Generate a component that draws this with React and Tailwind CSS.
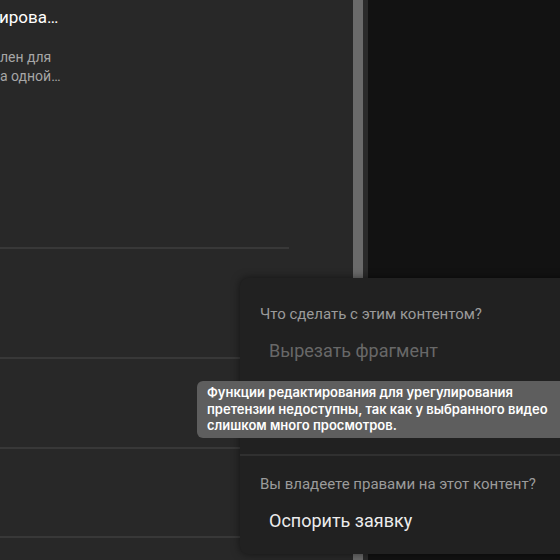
import React from 'react';

const Divider = () => <div className="h-[2px] w-[289px] bg-[#383838]" />;

const ClaimPopup = () => (
	<div className="absolute left-[240px] top-[278px] w-[340px] h-[276px] rounded-lg bg-[#212121] shadow-[0_0_8px_rgba(0,0,0,0.5)]">
		<div className="pt-[26px] pl-[20px] text-[15px] leading-[21px] text-[#9b9b9b]">
			Что сделать с этим контентом?
		</div>
		<div className="mt-[14px] pl-[29px] text-[18px] leading-[24px] text-[#686868]">
			Вырезать фрагмент
		</div>
		<div className="mt-[91px] h-[2px] bg-[#303030]" />
		<div className="mt-[18px] pl-[20px] text-[15px] leading-[21px] text-[#9b9b9b]">
			Вы владеете правами на этот контент?
		</div>
		<div className="mt-[14px] pl-[29px] text-[18px] leading-[24px] text-[#ececec]">
			Оспорить заявку
		</div>
	</div>
);

const Tooltip = () => (
	<div className="absolute left-[197px] top-[381px] w-[400px] rounded-md bg-[#5e5e5e] pl-[10px] pt-[3px] pb-[4px] font-[Inter,sans-serif] text-[13px] leading-[16.5px] font-semibold text-white whitespace-nowrap">
		Функции редактирования для урегулирования
		<br />
		претензии недоступны, так как у выбранного видео
		<br />
		слишком много просмотров.
	</div>
);

export default function App() {
	return (
		<div className="relative w-[560px] h-[560px] overflow-hidden flex font-[Roboto,sans-serif]">
			<div className="w-[353px] bg-[#282828] flex flex-col">
				<div className="pt-[5px] -ml-[1px] text-[17px] leading-[24px] text-white whitespace-nowrap">
					ирова…
				</div>
				<div className="mt-[19px] text-[14px] leading-[19px] text-[#a6a6a6] whitespace-nowrap">
					<div>лен для</div>
					<div>а одной…</div>
				</div>
				<div className="mt-[161px]">
					<Divider />
				</div>
				<div className="mt-[108px]">
					<Divider />
				</div>
				<div className="mt-[88px]">
					<Divider />
				</div>
				<div className="mt-[87px]">
					<Divider />
				</div>
			</div>
			<div className="w-[10px] bg-[#6a6a6a]" />
			<div className="w-[5px] bg-[#2a2a2a]" />
			<div className="flex-1 bg-[#121212]" />

			<ClaimPopup />
			<Tooltip />
		</div>
	);
}
